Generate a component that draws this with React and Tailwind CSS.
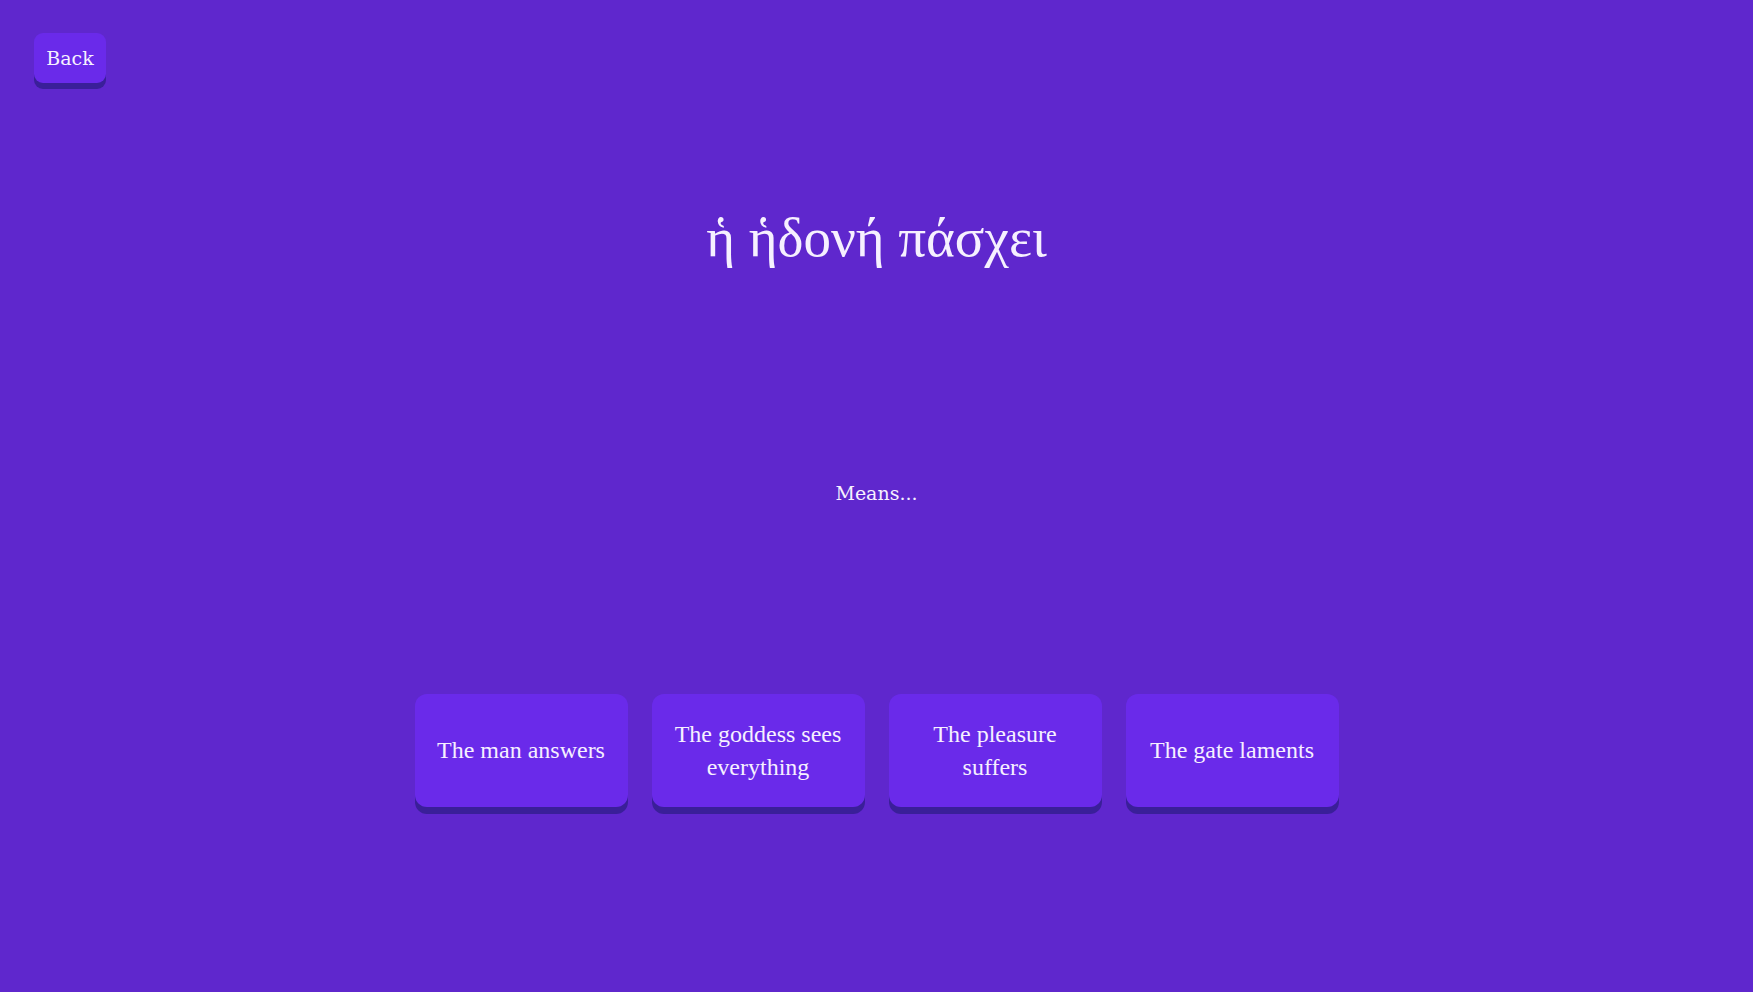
import React from 'react';

const choices = [
  'The man answers',
  'The goddess sees everything',
  'The pleasure suffers',
  'The gate laments',
];

const App = () => {
  return (
    <div className="min-h-screen w-full bg-[#5f27cd] text-[#f6f0ff] flex flex-col">
      <div className="pt-[33px] pl-[34px]">
        <button className="h-[50px] w-[72px] rounded-[9px] bg-[#6a2aea] shadow-[0_6px_0_#3a1f99] text-[19px] font-['DejaVu_Serif',serif]">
          Back
        </button>
      </div>

      <h1 className="mt-[122px] text-center text-[55px] leading-[66px] font-['Liberation_Serif',serif]">
        ἡ ἡδονή πάσχει
      </h1>

      <p className="mt-[210px] text-center text-[19px] leading-[24px] font-['DejaVu_Serif',serif]">
        Means...
      </p>

      <div className="mt-[189px] flex justify-center gap-[24px]">
        {choices.map((c) => (
          <button
            key={c}
            className="h-[113px] w-[213px] rounded-[12px] bg-[#6a2aea] shadow-[0_7px_0_#3a1f99] px-3 text-[24px] leading-[33px] font-['Liberation_Serif',serif]"
          >
            {c}
          </button>
        ))}
      </div>
    </div>
  );
};

export default App;
